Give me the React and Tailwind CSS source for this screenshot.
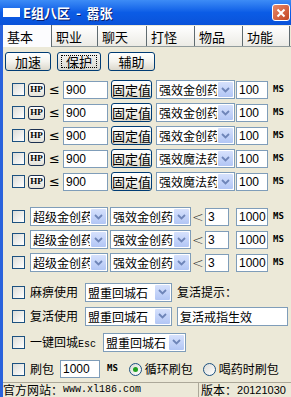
import React from 'react';

const Check = () => (
  <span className="block w-[13px] h-[13px] shrink-0 border border-[#1c5180] bg-linear-to-br from-[#dcdcd7] to-white" />
);

const Radio = ({ on }) => (
  <span className="flex w-[13px] h-[13px] shrink-0 items-center justify-center rounded-full border border-[#1c5180] bg-linear-to-br from-[#dcdcd7] to-white">
    {on && <span className="block w-[5px] h-[5px] rounded-full bg-[#21a121]" />}
  </span>
);

const Arrow = () => (
  <span className="flex w-[17px] h-full shrink-0 items-center justify-center border border-white rounded-[2px] bg-linear-to-b from-[#d6e1fc] to-[#b2c6f5]">
    <svg width="9" height="6" viewBox="0 0 9 6">
      <path d="M1 1l3.5 3.5L8 1" fill="none" stroke="#6e85b8" strokeWidth="1.8" />
    </svg>
  </span>
);

function Select({ w, text, className = '' }) {
  return (
    <div className={`flex h-[19px] shrink-0 border border-[#7f9db9] bg-white ${w} ${className}`}>
      <span className="flex-1 overflow-hidden whitespace-nowrap pl-[2px] leading-[17px]">{text}</span>
      <Arrow />
    </div>
  );
}

function Field({ w, value, className = '', num = true }) {
  return (
    <div
      className={`h-[18px] shrink-0 border border-[#7f9db9] bg-white pl-[2px] leading-[16px] whitespace-nowrap overflow-hidden ${w} ${className} ${num ? "font-['Liberation_Sans'] text-[12px]" : ''}`}
    >
      {value}
    </div>
  );
}

function XpButton({ w, children, focus, className = '' }) {
  return (
    <div
      className={`flex h-[19px] shrink-0 items-center justify-center rounded-[3px] border border-[#003c74] ${focus ? 'bg-linear-to-b from-[#f4f4f2] to-[#d8d8d2]' : 'bg-linear-to-b from-white via-[#f4f3ee] to-[#dcd8cc]'} ${w} ${className}`}
    >
      {focus ? (
        <span className="flex h-[13px] w-[calc(100%-6px)] items-center justify-center border border-dotted border-black text-[13px] leading-none">
          {children}
        </span>
      ) : (
        <span className="text-[13px] leading-none">{children}</span>
      )}
    </div>
  );
}

const Ms = ({ className = '' }) => (
  <span className={`font-['DejaVu_Sans_Mono'] text-[9px] font-bold ${className}`}>MS</span>
);

const tabs = [
  { t: '基本', w: 'w-[49px]', on: true },
  { t: '职业', w: 'w-[46px]' },
  { t: '聊天', w: 'w-[49px]' },
  { t: '打怪', w: 'w-[48px]' },
  { t: '物品', w: 'w-[48px]' },
  { t: '功能', w: 'w-[47px]' },
];

const hpRows = ['强效金创药', '强效金创药', '强效金创药', '强效魔法药', '强效魔法药'];

export default function App() {
  return (
    <div className="w-[291px] h-[397px] overflow-hidden flex flex-col bg-[#ece9d8] text-[12px] text-black font-['Noto_Sans_CJK_SC',sans-serif]">
      {/* 标题栏 */}
      <div className="flex h-[25px] shrink-0 items-center bg-linear-to-b from-[#3d8cf6] via-[#0b5ce6] to-[#0a52d9]">
        <span className="ml-[3px] block w-[17px] h-[9px] bg-white" />
        <span className="ml-[3px] whitespace-pre text-[13px] font-bold text-white [text-shadow:1px_1px_0_#0a1f6e]">
          E组八区  -  嚣张
        </span>
        <span className="ml-auto mr-[1px] flex w-[18px] h-[17px] items-center justify-center rounded-[3px] border border-white bg-linear-to-br from-[#e88868] to-[#c24420]">
          <svg width="10" height="10" viewBox="0 0 10 10">
            <path d="M1.5 1.5l7 7M8.5 1.5l-7 7" stroke="white" strokeWidth="2" />
          </svg>
        </span>
      </div>

      <div className="flex flex-1 flex-col border-l-[3px] border-[#2a62dc]">
        {/* 标签页 */}
        <div className="flex h-[22px] shrink-0 items-end border-b border-[#919b9c]">
          {tabs.map((tab) => (
            <div
              key={tab.t}
              className={`flex h-[20px] items-center pl-[4px] text-[13px] leading-none border-r border-[#5f6b70] ${tab.w} ${tab.on ? 'h-[22px] bg-[#fcfcfe] -mb-px' : 'bg-linear-to-b from-white to-[#ecebe5]'}`}
            >
              {tab.t}
            </div>
          ))}
        </div>

        {/* 按钮 */}
        <div className="mt-[5px] flex h-[19px] shrink-0 items-center pl-[2px]">
          <XpButton w="w-[46px]">加速</XpButton>
          <XpButton w="w-[44px]" focus className="ml-[6px]">保护</XpButton>
          <XpButton w="w-[47px]" className="ml-[7px]">辅助</XpButton>
        </div>

        {/* HP 行 */}
        <div className="mt-[7px] flex flex-col">
          {hpRows.map((drug, i) => (
            <div key={i} className="flex h-[23px] items-center pl-[9px]">
              <Check />
              <span className="ml-[3px] flex w-[17px] h-[14px] shrink-0 items-center justify-center rounded-[3px] border border-[#1c3050] bg-linear-to-b from-white to-[#e4e2d8] font-['Liberation_Serif'] text-[9px] font-bold leading-none">
                HP
              </span>
              <span className="ml-[4px] w-[10px] text-center text-[13px] leading-none font-['DejaVu_Sans']">≤</span>
              <Field w="w-[45px]" value="900" className="ml-[4px]" />
              <XpButton w="w-[41px]" className="ml-[3px] h-[17px]">固定值</XpButton>
              <Select w="w-[79px]" text={drug} className="ml-[4px]" />
              <Field w="w-[32px]" value="100" className="ml-[1px]" />
              <Ms className="ml-[5px]" />
            </div>
          ))}
        </div>

        {/* 超级金创药 行 */}
        <div className="mt-[12px] flex flex-col">
          {[0, 1, 2].map((i) => (
            <div key={i} className="flex h-[23px] items-center pl-[9px]">
              <Check />
              <Select w="w-[78px]" text="超级金创药" className="ml-[5px]" />
              <Select w="w-[81px]" text="强效金创药" className="ml-[2px]" />
              <span className="ml-[1px] w-[10px] text-center font-['DejaVu_Sans'] text-[14px] font-light leading-none text-[#333]">&lt;</span>
              <Field w="w-[24px]" value="3" className="ml-[3px]" />
              <Field w="w-[32px]" value="1000" className="ml-[7px]" />
              <Ms className="ml-[5px]" />
            </div>
          ))}
        </div>

        {/* 其它设置 */}
        <div className="mt-[6px] flex h-[24px] items-center pl-[9px]">
          <Check />
          <span className="ml-[5px] w-[48px] whitespace-nowrap">麻痹使用</span>
          <Select w="w-[87px]" text="盟重回城石" className="ml-[7px]" />
          <span className="ml-[5px] whitespace-nowrap">复活提示：</span>
        </div>
        <div className="flex h-[24px] items-center pl-[9px]">
          <Check />
          <span className="ml-[5px] w-[48px] whitespace-nowrap">复活使用</span>
          <Select w="w-[87px]" text="盟重回城石" className="ml-[7px]" />
          <Field w="w-[111px]" value="复活戒指生效" num={false} className="ml-[5px] h-[19px] leading-[17px]" />
        </div>
        <div className="mt-[2px] flex h-[24px] items-center pl-[9px]">
          <Check />
          <span className="ml-[5px] w-[66px] whitespace-nowrap">
            一键回城<span className="font-['Liberation_Mono'] text-[10px]">Esc</span>
          </span>
          <Select w="w-[83px]" text="盟重回城石" className="ml-[7px]" />
        </div>
        <div className="mt-[3px] flex h-[24px] items-center pl-[9px]">
          <Check />
          <span className="ml-[5px] w-[24px] whitespace-nowrap">刷包</span>
          <Field w="w-[40px]" value="1000" className="ml-[6px]" />
          <Ms className="ml-[7px]" />
          <span className="ml-[11px]"><Radio on /></span>
          <span className="ml-[3px] whitespace-nowrap">循环刷包</span>
          <span className="ml-[10px]"><Radio /></span>
          <span className="ml-[3px] whitespace-nowrap">喝药时刷包</span>
        </div>

        {/* 状态栏 */}
        <div className="mt-auto flex h-[15px] shrink-0 items-center border-t border-[#aca899] leading-none">
          <div className="flex w-[195px] items-center whitespace-nowrap">
            <span>官方网站：</span>
            <span className="font-['Liberation_Mono'] text-[10px]">www.xl186.com</span>
          </div>
          <div className="flex h-full flex-1 items-center whitespace-nowrap border-l border-[#aca899] pl-[2px]">
            <span>版本：</span>
            <span className="font-['Liberation_Sans'] text-[11px]">20121030</span>
          </div>
        </div>
      </div>
    </div>
  );
}
